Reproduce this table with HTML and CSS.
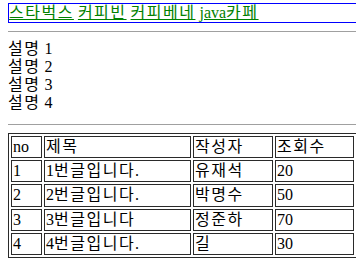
FILE: index.html
```html
<!DOCTYPE html>
<html lang="ko">
<head>
<meta charset="utf-8">
<title>카페</title>
<link rel="stylesheet" href="styles.css">
</head>
<body>
<div class="nav"><a href="#"><span class="ko">스타벅스</span></a> <a href="#"><span class="ko">커피빈</span></a> <a href="#"><span class="ko">커피베네</span></a> <a href="#">java<span class="ko">카페</span></a></div>
<hr class="rule">
<div class="desc">
  <div><span class="ko">설명</span> 1</div>
  <div><span class="ko">설명</span> 2</div>
  <div><span class="ko">설명</span> 3</div>
  <div><span class="ko">설명</span> 4</div>
</div>
<hr class="rule">
<table class="board">
  <colgroup>
    <col class="c-no"><col class="c-title"><col class="c-writer"><col class="c-hit">
  </colgroup>
  <tr><th>no</th><th><span class="ko">제목</span></th><th><span class="ko">작성자</span></th><th><span class="ko">조회수</span></th></tr>
  <tr><td>1</td><td>1<span class="ko">번글입니다</span>.</td><td><span class="ko">유재석</span></td><td>20</td></tr>
  <tr><td>2</td><td>2<span class="ko">번글입니다</span>.</td><td><span class="ko">박명수</span></td><td>50</td></tr>
  <tr><td>3</td><td>3<span class="ko">번글입니다</span></td><td><span class="ko">정준하</span></td><td>70</td></tr>
  <tr><td>4</td><td>4<span class="ko">번글입니다</span>.</td><td><span class="ko">길</span></td><td>30</td></tr>
</table>
</body>
</html>
```
FILE: styles.css
```css
html {
  overflow: hidden;
  background: #fff;
}
body {
  margin: 3px 8px 8px;
  font-family: "Liberation Serif", "Noto Sans CJK KR", serif;
  font-size: 16px;
  line-height: 18px;
  color: #000;
}
.ko {
  letter-spacing: 1.5px;
}
.nav {
  border: 1px solid #0000ff;
  height: 18px;
  margin-right: -20px;
  white-space: nowrap;
}
.nav a {
  color: #008000;
  text-decoration: underline;
}
.rule {
  height: 0;
  border: 0;
  border-top: 1px solid #a0a0a0;
  margin: 8px -20px 8px 0;
}
.desc {
  padding-bottom: 4px;
}
.board {
  border: 1px solid #2a2a2a;
  border-spacing: 2px;
  border-collapse: separate;
  table-layout: fixed;
  width: 349px;
}
.c-no { width: 31px; }
.c-title { width: 147px; }
.c-writer { width: 80px; }
.c-hit { width: 79px; }
.board th,
.board td {
  border: 1px solid #2a2a2a;
  padding: 1px;
  height: 18px;
  line-height: 18.2px;
  text-align: left;
  font-weight: normal;
  vertical-align: middle;
  white-space: nowrap;
  overflow: hidden;
}
```
